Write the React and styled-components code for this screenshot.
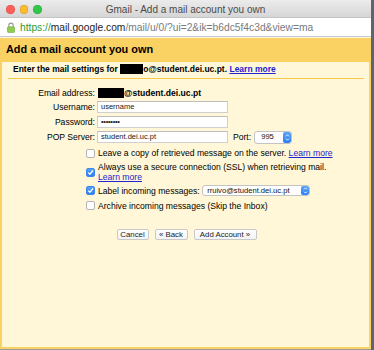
import React from "react";
import styled, { createGlobalStyle } from "styled-components";

const GlobalStyle = createGlobalStyle`
  html, body { margin: 0; padding: 0; }
  body {
    background: #5d6470;
    font-family: "Liberation Sans", Arial, sans-serif;
    width: 374px;
    height: 350px;
    overflow: hidden;
  }
`;

const Win = styled.div`
  width: 371px;
  height: 349px;
  display: flex;
  flex-direction: column;
  background: #fff7d7;
  border-bottom: 1px solid #9c9c9c;
`;

const TitleBar = styled.div`
  height: 18px;
  display: grid;
  grid-template-columns: 1fr auto 1fr;
  align-items: center;
  background: linear-gradient(#ececec, #d6d6d6);
  border-bottom: 1px solid #c4c4c4;
  box-sizing: border-box;
`;

const Lights = styled.div`
  display: flex;
  gap: 5px;
  padding-left: 6px;
  padding-top: 2px;
`;

const Light = styled.span`
  width: 8.5px;
  height: 8.5px;
  border-radius: 50%;
  background: ${(p) => p.$c};
  box-shadow: inset 0 0 0 0.5px rgba(0, 0, 0, 0.18);
`;

const Title = styled.div`
  font-family: "Liberation Sans", Arial, sans-serif;
  font-size: 10px;
  color: #4b4b4b;
  padding-top: 1px;
`;

const UrlBar = styled.div`
  height: 18px;
  display: flex;
  align-items: center;
  gap: 5px;
  padding-left: 7px;
  background: #fff;
  border-bottom: 1px solid #c2c8d4;
  font-size: 10.25px;
  color: #7a7a7a;
  white-space: nowrap;
`;

const Scheme = styled.span`
  color: #2f9a2f;
`;

const Domain = styled.span`
  color: #1d1d1d;
`;

const Dialog = styled.div`
  flex: 1;
  display: flex;
  flex-direction: column;
  background: #fad163;
  padding: 0 2px 2px;
  margin-top: 1px;
`;

const Header = styled.div`
  height: 24px;
  padding: 5px 0 0 4px;
  box-sizing: border-box;
  font-size: 10.9px;
  font-weight: bold;
  color: #000;
`;

const Body = styled.div`
  flex: 1;
  background: #fff7d7;
  display: flex;
  flex-direction: column;
`;

const Intro = styled.div`
  padding: 1px 11px 0;
  height: 13px;
  box-sizing: border-box;
  font-size: 8.5px;
  font-weight: bold;
  line-height: 10px;
  color: #000;
  display: flex;
  align-items: center;
  white-space: nowrap;
`;

const Redact = styled.span`
  display: inline-block;
  width: ${(p) => p.$w}px;
  height: 10px;
  background: #000;
`;

const Link = styled.a`
  color: #2323cf;
  text-decoration: underline;
  cursor: pointer;
  font-weight: ${(p) => (p.$bold ? "bold" : "normal")};
`;

const Separator = styled.div`
  height: 1px;
  background: #f3c94f;
  margin: 3px 5px 0 6px;
`;

const Form = styled.div`
  display: flex;
  flex-direction: column;
  gap: 2px;
  margin-top: 8px;
  font-size: 8.6px;
  color: #000;
`;

const Row = styled.div`
  display: grid;
  grid-template-columns: 93px 1fr;
  column-gap: 3px;
  align-items: center;
  min-height: ${(p) => p.$h || 13}px;
  line-height: 10px;
`;

const Label = styled.div`
  text-align: right;
  white-space: nowrap;
`;

const Value = styled.div`
  display: flex;
  align-items: center;
  white-space: nowrap;
  font-weight: ${(p) => (p.$bold ? "bold" : "normal")};
`;

const Field = styled.div`
  width: ${(p) => p.$w || 131}px;
  height: 12px;
  box-sizing: border-box;
  margin-left: -1px;
  background: #fff;
  border: 1px solid #cfcfcf;
  border-top-color: #bdbdbd;
  font-size: 7.5px;
  color: #1a1a1a;
  display: flex;
  align-items: center;
  padding-left: 3px;
  letter-spacing: ${(p) => (p.$pw ? "-0.3px" : "0")};
`;

const PortLabel = styled.span`
  margin: 0 3px 0 5px;
`;

const Select = styled.div`
  width: ${(p) => p.$w}px;
  height: ${(p) => p.$h || 13}px;
  box-sizing: border-box;
  background: #fff;
  border: 1px solid #c4c4c4;
  border-radius: 3px;
  display: flex;
  align-items: stretch;
  font-size: 7.6px;
  color: #111;
  overflow: hidden;
`;

const SelectText = styled.div`
  flex: 1;
  display: flex;
  align-items: center;
  padding-left: ${(p) => p.$pl || 5}px;
`;

const Stepper = styled.div`
  width: 8px;
  background: linear-gradient(#5aa4f8, #2a7ef2);
  border-radius: 2px;
  display: flex;
  align-items: center;
  justify-content: center;
`;

const Check = styled.div`
  justify-self: end;
  width: 9px;
  height: 9px;
  box-sizing: border-box;
  border-radius: 2px;
  border: 1px solid ${(p) => (p.$on ? "#3a86ee" : "#b4b4b4")};
  background: ${(p) => (p.$on ? "linear-gradient(#5aa3fa, #2c7ff0)" : "#fff")};
  display: flex;
  align-items: center;
  justify-content: center;
`;

const Text = styled.div`
  white-space: nowrap;
`;

const Buttons = styled.div`
  display: flex;
  justify-content: center;
  gap: 6px;
  margin-top: 17px;
  padding-left: 2px;
`;

const Button = styled.button`
  height: 11px;
  width: ${(p) => p.$w}px;
  padding: 0;
  box-sizing: border-box;
  border: 1px solid #c9c9c9;
  border-radius: 2px;
  background: linear-gradient(#ffffff, #f3f3f3);
  font-family: "Liberation Sans", Arial, sans-serif;
  font-size: 7.8px;
  line-height: 9px;
  color: #1a1a1a;
`;

const Lock = () => (
  <svg width="8" height="11" viewBox="0 0 8 11">
    <path d="M1.8 5 V3.3 A2.2 2.2 0 0 1 6.2 3.3 V5" fill="none" stroke="#9a9a9a" strokeWidth="1.1" />
    <rect x="0.5" y="4.8" width="7" height="5.7" rx="0.8" fill="#8fcf4f" stroke="#6aa83a" strokeWidth="0.6" />
  </svg>
);

const Arrows = () => (
  <svg width="5" height="9" viewBox="0 0 5 9">
    <path d="M1 3.4 L2.5 1.8 L4 3.4 M1 5.6 L2.5 7.2 L4 5.6" fill="none" stroke="#fff" strokeWidth="0.9" />
  </svg>
);

const Tick = () => (
  <svg width="7" height="7" viewBox="0 0 7 7">
    <path d="M1.2 3.6 L2.9 5.3 L5.9 1.5" fill="none" stroke="#fff" strokeWidth="1.3" />
  </svg>
);

export default function App() {
  return (
    <>
      <GlobalStyle />
      <Win>
        <TitleBar>
          <Lights>
            <Light $c="#fc5f57" />
            <Light $c="#fdbc2e" />
            <Light $c="#33c748" />
          </Lights>
          <Title>Gmail - Add a mail account you own</Title>
          <div />
        </TitleBar>
        <UrlBar>
          <Lock />
          <span>
            <Scheme>https://</Scheme>
            <Domain>mail.google.com</Domain>/mail/u/0/?ui=2&amp;ik=b6dc5f4c3d&amp;view=ma
          </span>
        </UrlBar>
        <Dialog>
          <Header>Add a mail account you own</Header>
          <Body>
            <Intro>
              Enter the mail settings for&nbsp;<Redact $w={23} />o@student.dei.uc.pt.&nbsp;
              <Link $bold>Learn more</Link>
            </Intro>
            <Separator />
            <Form>
              <Row $h={11}>
                <Label>Email address:</Label>
                <Value $bold>
                  <Redact $w={26} />@student.dei.uc.pt
                </Value>
              </Row>
              <Row>
                <Label>Username:</Label>
                <Value>
                  <Field>username</Field>
                </Value>
              </Row>
              <Row>
                <Label>Password:</Label>
                <Value>
                  <Field $pw>••••••••</Field>
                </Value>
              </Row>
              <Row $h={14}>
                <Label>POP Server:</Label>
                <Value>
                  <Field>student.dei.uc.pt</Field>
                  <PortLabel>Port:</PortLabel>
                  <Select $w={38}>
                    <SelectText $pl={6}>995</SelectText>
                    <Stepper>
                      <Arrows />
                    </Stepper>
                  </Select>
                </Value>
              </Row>
              <Row $h={14}>
                <Check />
                <Text>
                  Leave a copy of retrieved message on the server. <Link>Learn more</Link>
                </Text>
              </Row>
              <Row>
                <Check $on>
                  <Tick />
                </Check>
                <Text>
                  Always use a secure connection (SSL) when retrieving mail.
                  <br />
                  <Link>Learn more</Link>
                </Text>
              </Row>
              <Row>
                <Check $on>
                  <Tick />
                </Check>
                <Value>
                  Label incoming messages:&nbsp;
                  <Select $w={108} $h={11}>
                    <SelectText $pl={4}>rruivo@student.dei.uc.pt</SelectText>
                    <Stepper>
                      <Arrows />
                    </Stepper>
                  </Select>
                </Value>
              </Row>
              <Row>
                <Check />
                <Text>Archive incoming messages (Skip the Inbox)</Text>
              </Row>
            </Form>
            <Buttons>
              <Button $w={32}>Cancel</Button>
              <Button $w={33}>« Back</Button>
              <Button $w={63}>Add Account »</Button>
            </Buttons>
          </Body>
        </Dialog>
      </Win>
    </>
  );
}
